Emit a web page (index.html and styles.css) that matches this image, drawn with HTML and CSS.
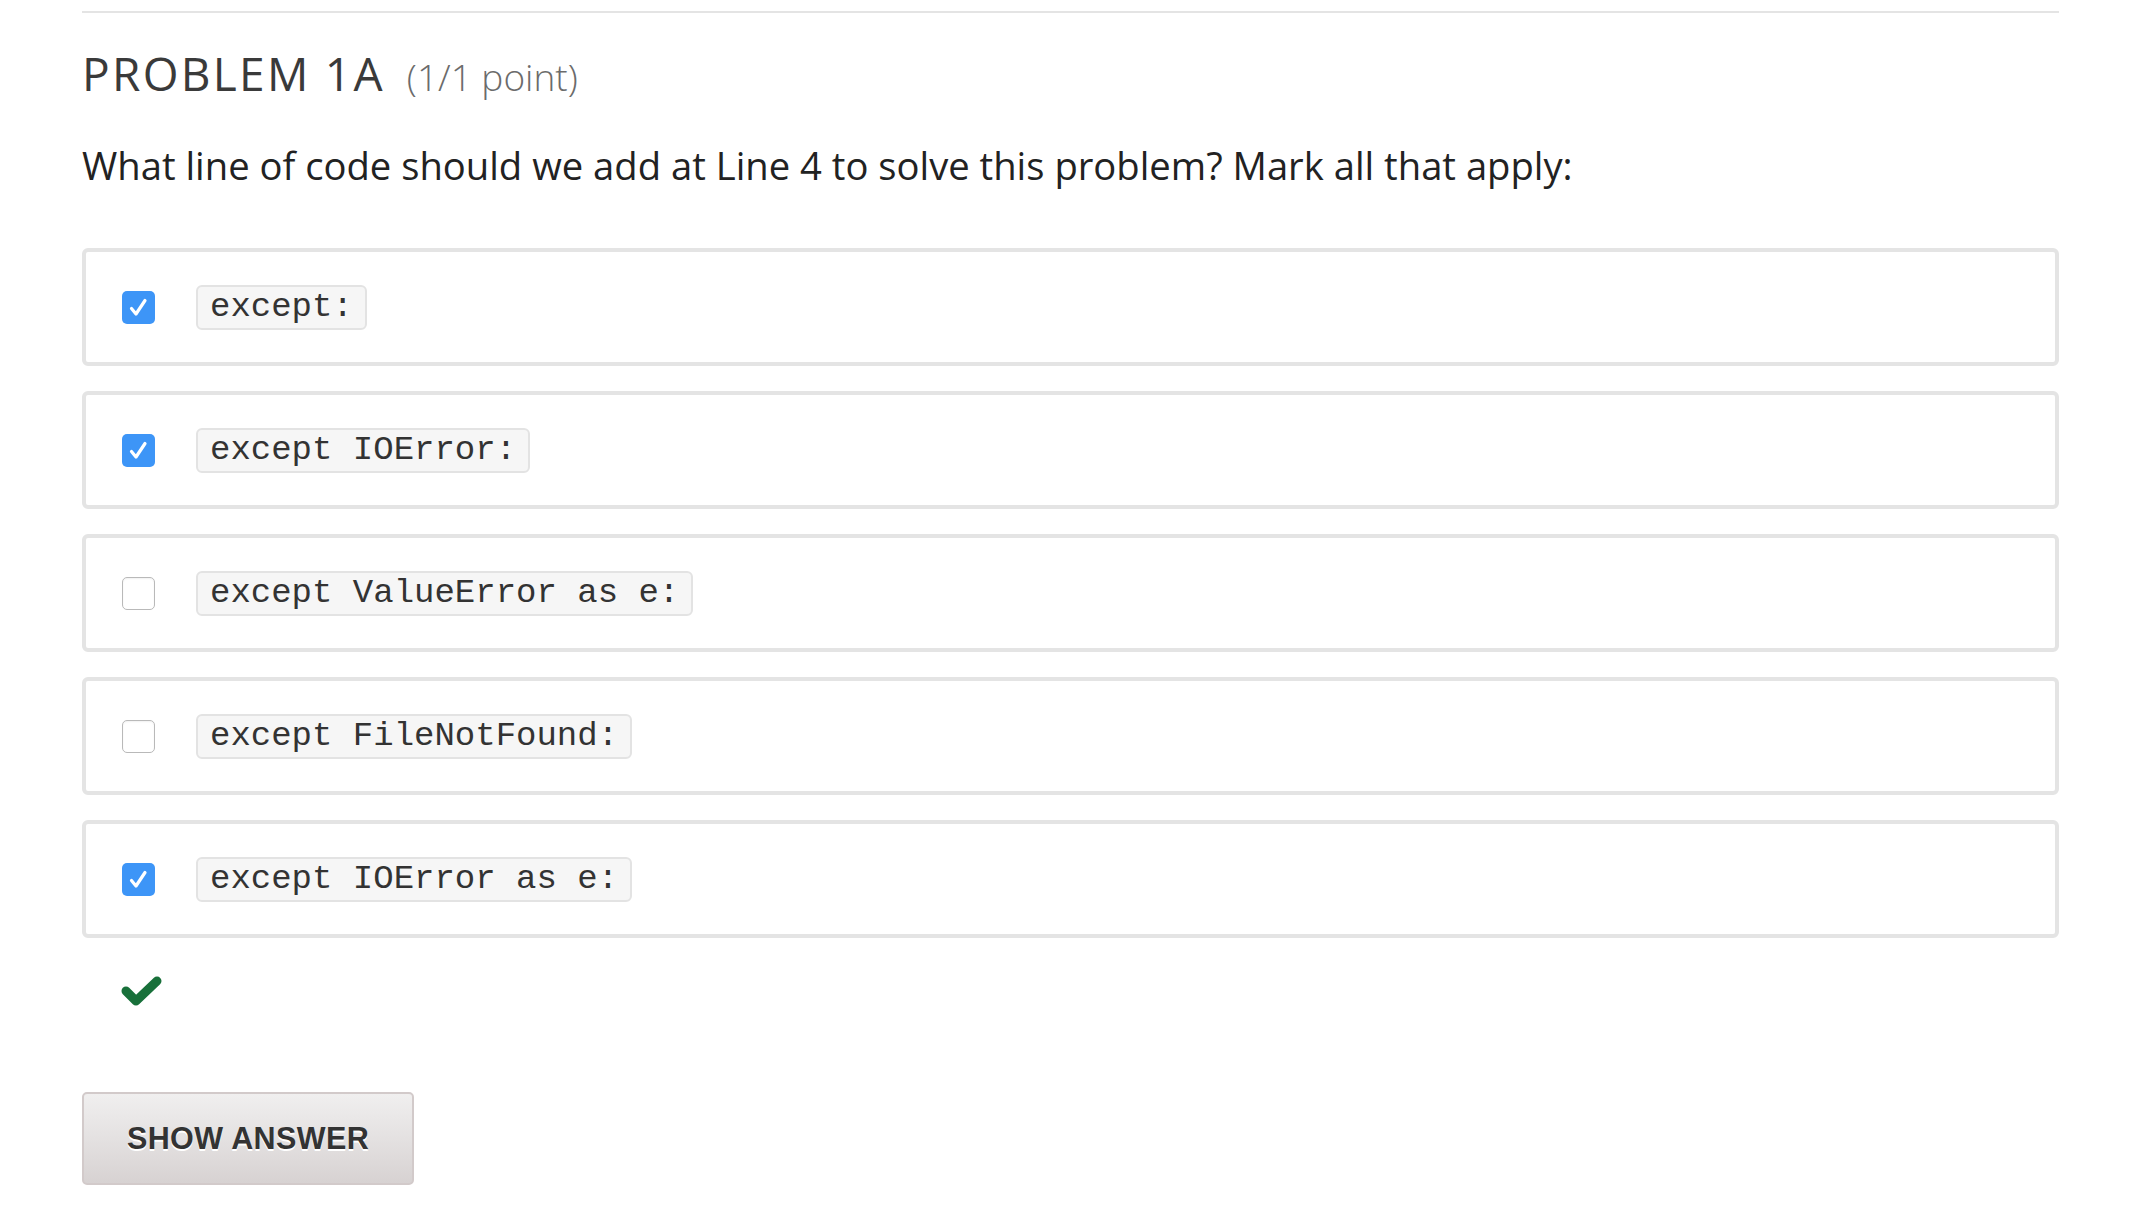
FILE: index.html
```html
<!DOCTYPE html>
<html lang="en">
<head>
<meta charset="utf-8">
<title>Problem 1A</title>
<link rel="stylesheet" href="styles.css">
</head>
<body>
<div class="page">
  <div class="rule"></div>
  <h2 class="title"><span class="name">PROBLEM 1A</span><span class="points">(1/1 point)</span></h2>
  <p class="question">What line of code should we add at Line 4 to solve this problem? Mark all that apply:</p>
  <div class="choices">
    <label class="choice">
      <span class="cb checked"><svg viewBox="0 0 33 33" width="33" height="33"><rect x="0" y="0" width="33" height="33" rx="5" fill="#3d95f7"/><path d="M9.5 17.5 L14 23 L23 9.5" fill="none" stroke="#fff" stroke-width="3.2" stroke-linecap="round" stroke-linejoin="round"/></svg></span>
      <code class="code">except:</code>
    </label>
    <label class="choice">
      <span class="cb checked"><svg viewBox="0 0 33 33" width="33" height="33"><rect x="0" y="0" width="33" height="33" rx="5" fill="#3d95f7"/><path d="M9.5 17.5 L14 23 L23 9.5" fill="none" stroke="#fff" stroke-width="3.2" stroke-linecap="round" stroke-linejoin="round"/></svg></span>
      <code class="code">except IOError:</code>
    </label>
    <label class="choice">
      <span class="cb"></span>
      <code class="code">except ValueError as e:</code>
    </label>
    <label class="choice">
      <span class="cb"></span>
      <code class="code">except FileNotFound:</code>
    </label>
    <label class="choice">
      <span class="cb checked"><svg viewBox="0 0 33 33" width="33" height="33"><rect x="0" y="0" width="33" height="33" rx="5" fill="#3d95f7"/><path d="M9.5 17.5 L14 23 L23 9.5" fill="none" stroke="#fff" stroke-width="3.2" stroke-linecap="round" stroke-linejoin="round"/></svg></span>
      <code class="code">except IOError as e:</code>
    </label>
  </div>
  <div class="status">
    <svg viewBox="0 0 42 32" width="42" height="32"><polyline points="6,16 16,26 37,6" fill="none" stroke="#18703a" stroke-width="9" stroke-linecap="round" stroke-linejoin="round"/></svg>
  </div>
  <button class="show" type="button">SHOW ANSWER</button>
</div>
</body>
</html>
```

FILE: styles.css
```css
html, body {
  margin: 0;
  padding: 0;
  background: #ffffff;
}

.page {
  width: 1977px;
  margin-left: 82px;
  padding-top: 11px;
  font-family: "Open Sans", "Noto Sans", sans-serif;
}

.rule {
  height: 2px;
  background: #e4e4e4;
}

.title {
  margin: 32px 0 0 0;
  font-size: 46px;
  line-height: 56px;
  font-weight: 400;
  color: #3a3a3a;
  display: flex;
  align-items: baseline;
}

.name {
  letter-spacing: 2.3px;
}

.points {
  margin-left: 22px;
  font-size: 37px;
  color: #6b6b6b;
  font-weight: 300;
  letter-spacing: 0;
}

.question {
  margin: 36px 0 0 0;
  font-size: 38.2px;
  line-height: 48px;
  color: #222222;
}

.choices {
  margin-top: 59px;
  display: flex;
  flex-direction: column;
  gap: 25px;
}

.choice {
  box-sizing: border-box;
  height: 118px;
  border: 4px solid #e4e4e4;
  border-radius: 6px;
  display: flex;
  align-items: center;
  padding: 0 36px;
  gap: 41px;
}

.cb {
  box-sizing: border-box;
  width: 33px;
  height: 33px;
  border-radius: 5px;
  border: 1.5px solid #b9b9b9;
  background: #ffffff;
  box-shadow: inset 0 1px 2px rgba(0, 0, 0, 0.06);
  display: block;
  flex: none;
}

.cb.checked {
  border: 0;
  box-shadow: none;
}

.cb svg {
  display: block;
}

.code {
  font-family: "Courier New", Courier, "Nimbus Mono PS", "FreeMono", "Liberation Mono", monospace;
  font-size: 34px;
  line-height: 37px;
  color: #333333;
  background: #f6f6f6;
  border: 2px solid #e3e3e3;
  border-radius: 6px;
  padding: 2px 12px;
  white-space: pre;
}

.status {
  margin-top: 37px;
  padding-left: 38px;
  height: 32px;
}

.status svg {
  display: block;
}

.show {
  margin-top: 85px;
  display: block;
  box-sizing: border-box;
  width: 332px;
  height: 93px;
  border: 2px solid #d2caca;
  border-radius: 5px;
  background: linear-gradient(to bottom, #f0efef 0%, #e4e1e1 50%, #d7d2d2 100%);
  font-family: "Liberation Sans", Arial, sans-serif;
  font-weight: 700;
  font-size: 30.5px;
  letter-spacing: 0.4px;
  color: #333333;
  text-shadow: 0 2px 0 #ffffff;
  padding: 0;
  cursor: pointer;
}
```
